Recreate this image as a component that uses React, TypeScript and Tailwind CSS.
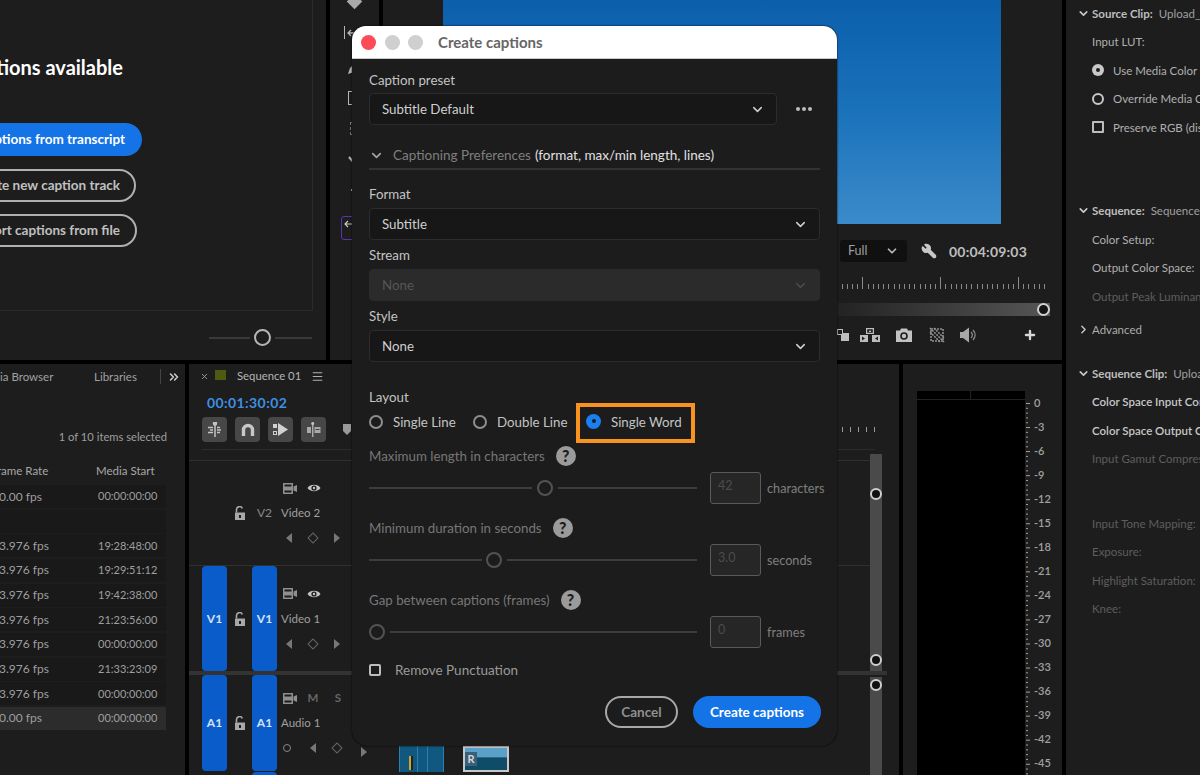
import { ChevronDown, ChevronRight, ChevronsRight, Menu, Plus, Wrench, X } from "lucide-react";

const MEDIA_ROWS = [
  { rate: "30.00 fps", start: "00:00:00:00" },
  { rate: "", start: "" },
  { rate: "23.976 fps", start: "19:28:48:00" },
  { rate: "23.976 fps", start: "19:29:51:12" },
  { rate: "23.976 fps", start: "19:42:38:00" },
  { rate: "23.976 fps", start: "21:23:56:00" },
  { rate: "23.976 fps", start: "00:00:00:00" },
  { rate: "23.976 fps", start: "21:33:23:09" },
  { rate: "23.976 fps", start: "00:00:00:00" },
  { rate: "30.00 fps", start: "00:00:00:00", selected: true },
];

const DB_LABELS = ["0", "-3", "-6", "-9", "-12", "-15", "-18", "-21", "-24", "-27", "-30", "-33", "-36", "-39", "-42", "-45"];

function FilmIcon() {
  return (
    <svg className="shrink-0" width="14" height="11" viewBox="0 0 14 11" fill="#8f8f8f">
      <path d="M0 0h10v11H0zM1.5 1.5v2h7v-2zM1.5 7.5v2h7v-2z" fillRule="evenodd" />
      <path d="M10.5 3.5L14 2v7l-3.5-1.5z" />
    </svg>
  );
}

function LockIcon() {
  return (
    <svg width="12" height="14" viewBox="0 0 12 14" fill="#a8a8a8">
      <path d="M1 6.5h10V14H1zM5 9v3h2V9z" fillRule="evenodd" />
      <path d="M2.5 6.5V3.5a3 3 0 0 1 5.8-1" fill="none" stroke="#a8a8a8" strokeWidth="1.6" />
    </svg>
  );
}

function EyeIcon() {
  return (
    <svg className="shrink-0" width="14" height="10" viewBox="0 0 14 10">
      <path d="M0.5 5C3 0.8 11 0.8 13.5 5C11 9.2 3 9.2 0.5 5z" fill="#c4c4c4" />
      <circle cx="7" cy="5" r="2.6" fill="#1d1d1d" />
      <circle cx="7" cy="5" r="1.2" fill="#c4c4c4" />
    </svg>
  );
}

function TriLeft({ className }: { className?: string }) {
  return <span className={`w-0 h-0 shrink-0 border-y-[5px] border-y-transparent border-r-[6px] border-r-[#777] ${className ?? ""}`} />;
}

function TriRight() {
  return <span className="w-0 h-0 shrink-0 border-y-[5px] border-y-transparent border-l-[6px] border-l-[#777]" />;
}

function KeyDiamond() {
  return <span className="w-[8px] h-[8px] shrink-0 rotate-45 border border-[#666] mx-[1px]" />;
}

function TrackButton({ label, active }: { label: string; active?: boolean }) {
  return (
    <div
      className={`w-[25px] flex items-center justify-center rounded-[4px] text-[12px] ${
        active ? "bg-[#0b5ccb] text-[#d5e2f5] font-bold" : "text-[#8a8a8a]"
      }`}
    >
      {label}
    </div>
  );
}

function Track({ src, name, label, audio, h }: { src?: string; name: string; label: string; audio?: boolean; h: string }) {
  const active = !!src;
  return (
    <div className={`flex pl-[13px] ${h}`}>
      {active ? <TrackButton label={src!} active /> : <div className="w-[25px]" />}
      <div className="w-[25px] flex items-center justify-center">
        <LockIcon />
      </div>
      <TrackButton label={label} active={active} />
      <div className="w-[76px] pl-[4px] flex flex-col justify-center gap-[11px] text-[11.5px] text-[#a0a0a0]">
        <div className="flex items-center gap-[10px] pl-[2px] h-[14px]">
          <FilmIcon />
          {audio ? (
            <>
              <span className="w-[12px] text-center font-bold text-[#666]">M</span>
              <span className="w-[12px] ml-[3px] text-center font-bold text-[#666]">S</span>
            </>
          ) : (
            <EyeIcon />
          )}
        </div>
        <div className="h-[14px] leading-[14px] whitespace-nowrap">{name}</div>
        <div className="flex items-center gap-[16px] h-[14px] pl-[5px]">
          {audio && <span className="w-[8px] h-[8px] ml-[-3px] shrink-0 rounded-full border border-[#888]" />}
          <TriLeft className={audio ? "ml-[3px]" : ""} />
          <KeyDiamond />
          {!audio && <TriRight />}
        </div>
      </div>
    </div>
  );
}

function Fader({ children, className }: { children: React.ReactNode; className: string }) {
  return <div className={`w-[12px] bg-[#4a4a4a] flex flex-col items-center ${className}`}>{children}</div>;
}

function FaderHandle({ className }: { className?: string }) {
  return <span className={`block w-[12px] h-[12px] shrink-0 rounded-full bg-[#111] border-[2px] border-[#cfcfcf] ${className ?? ""}`} />;
}

function ToolButton({ children }: { children: React.ReactNode }) {
  return <div className="w-[25px] h-[25px] rounded-[4px] bg-[#474747] flex items-center justify-center">{children}</div>;
}

function Select({ value, disabled, className }: { value: string; disabled?: boolean; className?: string }) {
  return (
    <div
      className={`h-[32px] rounded-[4px] flex items-center justify-between pl-[12px] pr-[11px] text-[13.3px] border ${
        disabled ? "bg-[#2b2b2b] border-[#2b2b2b] text-[#565656]" : "bg-[#171717] border-[#2c2c2c] text-[#cfcfcf]"
      } ${className ?? ""}`}
    >
      <span className="mt-[2px]">{value}</span>
      <ChevronDown size={15} strokeWidth={2.4} color={disabled ? "#4a4a4a" : "#cfcfcf"} />
    </div>
  );
}

function Label({ children, className }: { children: React.ReactNode; className?: string }) {
  return <div className={`text-[13.3px] leading-[18px] text-[#c4c4c4] ${className ?? ""}`}>{children}</div>;
}

function Radio({ label, checked }: { label: string; checked?: boolean }) {
  return (
    <div className="flex items-center gap-[10px] text-[13.3px] text-[#c4c4c4]">
      {checked ? (
        <span className="w-[15px] h-[15px] mb-[3px] shrink-0 rounded-full bg-[#1a7ff0] flex items-center justify-center">
          <span className="w-[4px] h-[4px] rounded-full bg-[#1b1b1b]" />
        </span>
      ) : (
        <span className="w-[14px] h-[14px] mb-[3px] shrink-0 rounded-full border-[2px] border-[#8e8e8e]" />
      )}
      <span className="whitespace-nowrap">{label}</span>
    </div>
  );
}

function HelpLabel({ children }: { children: string }) {
  return (
    <div className="flex items-center gap-[11px] h-[22px] text-[13.3px] text-[#777]">
      <span className="mt-[2px] whitespace-nowrap">{children}</span>
      <span className="w-[20px] h-[20px] rounded-full bg-[#9b9b9b] flex items-center justify-center text-[16px] font-black text-[#1c1c1c]">?</span>
    </div>
  );
}

function SliderRow({ left, right, value, unit }: { left: string; right: string; value: string; unit: string }) {
  return (
    <div className="flex items-center h-[32px] whitespace-nowrap">
      <div className="flex items-center w-[329px] shrink-0">
        <span className={`h-[2px] bg-[#3d3d3d] ${left}`} />
        <span className="w-[16px] h-[16px] rounded-full border-[2px] border-[#525252] shrink-0" />
        <span className={`h-[2px] bg-[#3d3d3d] ml-[5px] ${right}`} />
      </div>
      <div className="w-[51px] h-[32px] ml-[12px] shrink-0 rounded-[3px] border border-[#5a5a5a] bg-[#262626] pl-[7px] text-[12.5px] leading-[26px] text-[#4c4c4c]">{value}</div>
      <span className="ml-[6px] mt-[2px] text-[12.7px] text-[#7f7f7f]">{unit}</span>
    </div>
  );
}

function CaptionsDialog() {
  return (
    <div className="absolute left-[352px] top-[26px] w-[485px] h-[720px] rounded-t-[14px] rounded-b-[16px] overflow-hidden bg-[#1c1c1c] flex flex-col shadow-[0_0_2px_#000]">
      <div className="h-[33px] shrink-0 bg-white border-b border-[#c8c8c8] flex items-center pl-[9px]">
        <span className="w-[15px] h-[15px] rounded-full bg-[#fb4c58]" />
        <span className="w-[15px] h-[15px] ml-[8.5px] rounded-full bg-[#cfcfcf]" />
        <span className="w-[15px] h-[15px] ml-[8.5px] rounded-full bg-[#cfcfcf]" />
        <span className="ml-[15px] text-[15px] font-bold text-[#666]">Create captions</span>
      </div>
      <div className="pl-[17px] flex flex-col">
        <Label className="mt-[12px] mb-[4px]">Caption preset</Label>
        <div className="flex items-center">
          <Select value="Subtitle Default" className="w-[408px]" />
          <div className="flex gap-[2px] ml-[19px]">
            <span className="w-[4px] h-[4px] rounded-full bg-[#bdbdbd]" />
            <span className="w-[4px] h-[4px] rounded-full bg-[#bdbdbd]" />
            <span className="w-[4px] h-[4px] rounded-full bg-[#bdbdbd]" />
          </div>
        </div>
        <div className="mt-[21px] h-[24px] border-b-[2px] border-[#333] flex items-start w-[451px]">
          <ChevronDown size={15} strokeWidth={2.6} color="#a5a5a5" className="mt-[2px]" />
          <span className="ml-[9px] text-[13.5px] leading-[18px] whitespace-nowrap text-[#7f7f7f]">Captioning Preferences</span>
          <span className="ml-[4px] text-[13.5px] leading-[18px] whitespace-nowrap text-[#e0e0e0]">(format, max/min length, lines)</span>
        </div>
        <Label className="mt-[15px] mb-[5px]">Format</Label>
        <Select value="Subtitle" className="w-[451px]" />
        <Label className="mt-[6px] mb-[5px]">Stream</Label>
        <Select value="None" disabled className="w-[451px]" />
        <Label className="mt-[6px] mb-[5px]">Style</Label>
        <Select value="None" className="w-[451px]" />
        <Label className="mt-[26px]">Layout</Label>
        <div className="flex items-center h-[40px] mt-[-3px]">
          <div className="w-[104px]">
            <Radio label="Single Line" />
          </div>
          <div className="w-[103px]">
            <Radio label="Double Line" />
          </div>
          <div className="w-[119px] h-[40px] border-[4px] border-[#f7931e] pl-[6px] pb-[1px] flex items-center">
            <Radio label="Single Word" checked />
          </div>
        </div>
        <div className="mt-[2px]">
          <HelpLabel>Maximum length in characters</HelpLabel>
        </div>
        <div className="mt-[5px]">
          <SliderRow left="w-[163px] mr-[5px]" right="w-[139px]" value="42" unit="characters" />
        </div>
        <div className="mt-[13px]">
          <HelpLabel>Minimum duration in seconds</HelpLabel>
        </div>
        <div className="mt-[5px]">
          <SliderRow left="w-[113px] mr-[4px]" right="w-[190px]" value="3.0" unit="seconds" />
        </div>
        <div className="mt-[13px]">
          <HelpLabel>Gap between captions (frames)</HelpLabel>
        </div>
        <div className="mt-[5px]">
          <SliderRow left="w-0" right="w-[307px]" value="0" unit="frames" />
        </div>
        <div className="mt-[13px] flex items-center h-[18px] text-[13.5px] text-[#9a9a9a]">
          <span className="w-[12px] h-[12px] border-[2px] border-[#bdbdbd] rounded-[2px]" />
          <span className="ml-[14px]">Remove Punctuation</span>
        </div>
        <div className="mt-[17px] flex justify-end w-[452px] gap-[15px]">
          <div className="w-[73px] h-[32px] rounded-full border-[2px] border-[#a8a8a8] flex items-center justify-center text-[13.5px] font-bold text-[#8f8f8f]">Cancel</div>
          <div className="w-[128px] h-[32px] rounded-full bg-[#1473e6] flex items-center justify-center text-[13.5px] font-bold text-white">Create captions</div>
        </div>
      </div>
    </div>
  );
}

function CaptionsPanel() {
  return (
    <div className="w-[326px] h-full bg-[#1d1d1d] flex flex-col overflow-hidden">
      <div className="h-[311px] mr-[13px] border-r border-b border-[#2b2b2b] flex flex-col items-end whitespace-nowrap">
        <div className="mt-[53px] mr-[189px] text-[20px] leading-[28px] font-bold text-white">No captions available</div>
        <div className="mt-[42px] mr-[170px] h-[33px] px-[17px] rounded-full bg-[#1473e6] flex items-center text-[13.5px] font-bold text-white">Create captions from transcript</div>
        <div className="mt-[13px] mr-[176px] h-[33px] px-[14px] rounded-full border-[2px] border-[#b0b0b0] flex items-center text-[13.5px] font-bold text-[#c0c0c0]">Create new caption track</div>
        <div className="mt-[12px] mr-[175px] h-[33px] px-[15px] rounded-full border-[2px] border-[#b0b0b0] flex items-center text-[13.5px] font-bold text-[#c0c0c0]">Import captions from file</div>
      </div>
      <div className="flex items-center justify-end mr-[14px] mt-[18px]">
        <span className="w-[41px] h-[2px] bg-[#3a3a3a]" />
        <span className="w-[17px] h-[17px] mx-[4px] rounded-full border-[2px] border-[#b5b5b5]" />
        <span className="w-[37px] h-[2px] bg-[#3a3a3a]" />
      </div>
    </div>
  );
}

function ProgramPanel() {
  const ticks = Array.from({ length: 40 }, (_, i) => i);
  return (
    <div className="w-[732px] h-full flex gap-[4px]">
      <div className="w-[49px] bg-[#1d1d1d] flex flex-col items-center overflow-hidden">
        <span className="w-[11px] h-[11px] mt-[-4px] shrink-0 rotate-45 bg-[#a8a8a8]" />
        <div className="mt-[19px] flex items-center gap-[1px] mr-[6px]">
          <span className="w-[1px] h-[13px] bg-[#b5b5b5]" />
          <svg width="14" height="10" viewBox="0 0 14 10" fill="none" stroke="#b5b5b5" strokeWidth="1.3"><path d="M13 5H2M5 2L2 5l3 3" /></svg>
        </div>
        <svg className="mt-[22px] mr-[1px] shrink-0" width="14" height="14" viewBox="0 0 14 14" fill="#b5b5b5"><path d="M1 13l2-6 6-6 4 4-6 6z" /></svg>
        <span className="mt-[16px] mr-[3px] w-[11px] h-[14px] shrink-0 border border-[#b5b5b5]" />
        <span className="mt-[17px] mr-[1px] w-[9px] h-[13px] shrink-0 border border-dashed border-[#777]" />
        <svg className="mt-[20px] mr-[3px] shrink-0" width="14" height="14" viewBox="0 0 14 14" fill="none" stroke="#b5b5b5" strokeWidth="2"><path d="M3 2l5 6M12 7l-4 1v5" /></svg>
        <span className="mt-[20px] w-[7px] h-[7px] shrink-0 border-t-[2px] border-r-[2px] border-[#b5b5b5]" />
        <div className="mt-[20px] mr-[7px] w-[20px] h-[24px] shrink-0 rounded-[3px] border border-[#5a35a8] pl-[2px] pt-[3px]">
          <svg width="9" height="8" viewBox="0 0 9 8" fill="none" stroke="#c8c8c8" strokeWidth="1.2"><path d="M9 4H1M4 1L1 4l3 3" /></svg>
        </div>
      </div>
      <div className="flex-1 bg-[#1d1d1d] flex flex-col">
        <div className="h-[224px] pl-[60px] pr-[61px]">
          <div className="h-full bg-gradient-to-b from-[#0b5fab] via-[#1a72ba] to-[#3a8bca]" />
        </div>
        <div className="mt-[16px] h-[22px] flex items-center justify-end pr-[35px]">
          <div className="w-[67px] h-[22px] rounded-[3px] bg-[#101010] flex items-center justify-between pl-[8px] pr-[8px] text-[12.5px] text-[#a0a0a0]">
            <span>Full</span>
            <ChevronDown size={14} strokeWidth={3} color="#b8b8b8" />
          </div>
          <Wrench size={16} color="#c8c8c8" fill="#c8c8c8" className="ml-[14px] -scale-x-100" />
          <span className="ml-[12px] text-[14px] font-bold tracking-[0.2px] text-[#bdbdbd]">00:04:09:03</span>
        </div>
        <div className="mt-[15px] h-[12px] flex items-end justify-end gap-[4.2px] pr-[17px]">
          {ticks.map((i) => (
            <span key={i} className={`w-[1px] bg-[#8a8a8a] ${i % 15 === 4 ? "h-[12px]" : "h-[5px]"}`} />
          ))}
        </div>
        <div className="mt-[14px] flex justify-end pr-[12px]">
          <div className="w-[240px] h-[13px] bg-gradient-to-r from-[#1d1d1d] to-[#565656] flex items-center justify-end">
            <span className="w-[13px] h-[13px] rounded-full bg-[#141414] border-[2px] border-[#d0d0d0]" />
          </div>
        </div>
        <div className="mt-[12px] h-[14px] flex items-center justify-end pr-[25px]">
          <svg width="12" height="12" viewBox="0 0 12 12" fill="#bdbdbd"><rect x="4" y="4" width="8" height="8" /><rect x="0.5" y="0.5" width="5" height="5" fill="#1d1d1d" stroke="#bdbdbd" /></svg>
          <svg className="ml-[11px]" width="20" height="14" viewBox="0 0 20 14" fill="#bdbdbd">
            <path d="M6 0h8v6H6zM7.2 1.2v3.6h5.6V1.2z" fillRule="evenodd" />
            <path d="M8.5 4l1.5-2 1.5 2z" />
            <rect x="0" y="7" width="8" height="7" />
            <rect x="12" y="7" width="8" height="7" />
            <path d="M2 8.5l3 2-3 2zM18 8.5l-3 2 3 2z" fill="#1d1d1d" />
          </svg>
          <svg className="ml-[16px]" width="16" height="14" viewBox="0 0 16 14" fill="#c2c2c2">
            <path d="M0 2.5h4l1-2h6l1 2h4V14H0z" />
            <circle cx="8" cy="8" r="3" fill="none" stroke="#1d1d1d" strokeWidth="1.6" />
          </svg>
          <svg className="ml-[17px]" width="16" height="16" viewBox="0 0 16 16" fill="none" stroke="#8f8f8f" strokeWidth="1.6" strokeDasharray="2 1">
            <rect x="2" y="2" width="12" height="12" />
            <path d="M1 1l14 14M1 5l10 10M5 1l10 10" />
          </svg>
          <svg className="ml-[15px]" width="17" height="16" viewBox="0 0 17 16">
            <path d="M0 5h3l6-4.5v15L3 11H0z" fill="#a8a8a8" />
            <path d="M11 5a4 4 0 0 1 0 6M13 3a7 7 0 0 1 0 10" fill="none" stroke="#8f8f8f" strokeWidth="1.2" />
          </svg>
          <Plus size={14} color="#d8d8d8" strokeWidth={4} className="ml-[46px]" />
        </div>
      </div>
    </div>
  );
}

function MediaPanel() {
  return (
    <div className="w-[185px] h-full bg-[#1d1d1d] overflow-hidden whitespace-nowrap text-[11.5px] text-[#9f9f9f]">
      <div className="h-[25px] flex items-center text-[#a0a0a0]">
        <span className="ml-[-23px] w-[117px] shrink-0">Media Browser</span>
        <span className="w-[66px] shrink-0">Libraries</span>
        <span className="w-[1px] h-[15px] bg-[#444] shrink-0" />
        <ChevronsRight size={14} color="#d0d0d0" strokeWidth={2.6} className="ml-[6px] shrink-0" />
      </div>
      <div className="mt-[39px] h-[18px] leading-[18px] w-[167px] text-right text-[11.2px]">1 of 10 items selected</div>
      <div className="mt-[16px] h-[18px] flex items-center text-[#a8a8a8]">
        <span className="ml-[-9px] w-[105px] shrink-0">Frame Rate</span>
        <span>Media Start</span>
      </div>
      <div className="mt-[5px] w-[166px] flex flex-col gap-[1.67px]">
        {MEDIA_ROWS.map((row, i) => (
          <div key={i} className={`h-[23px] flex items-center ${row.selected ? "bg-[#2c2c2c]" : "bg-[#191919]"}`}>
            <span className="ml-[-8px] w-[106px] shrink-0 text-[12px]">{row.rate}</span>
            <span className="text-[11px]">{row.start}</span>
          </div>
        ))}
      </div>
    </div>
  );
}

function TimelinePanel() {
  return (
    <div className="w-[710px] h-full bg-[#1d1d1d] flex flex-col overflow-hidden">
      <div className="h-[25px] flex items-center pl-[11px] text-[11.3px] text-[#b5b5b5]">
        <X size={9} color="#999" strokeWidth={2.5} />
        <span className="ml-[6px] w-[11px] h-[10px] mb-[3px] bg-[#4d5a12]" />
        <span className="ml-[11px]">Sequence 01</span>
        <Menu size={13} color="#b0b0b0" className="ml-[10px]" />
      </div>
      <div className="h-[18px] mt-[5px] pl-[18px] text-[14px] leading-[18px] font-bold tracking-[0.4px] text-[#3f8fe0]">00:01:30:02</div>
      <div className="mt-[5px] pl-[13px] pr-[24px] h-[25px] flex items-center gap-[8px]">
        <ToolButton>
          <svg width="15" height="15" viewBox="0 0 15 15" fill="none" stroke="#c4c4c4" strokeWidth="1.5">
            <path d="M8 0v15M1 5.5h5M3 8h3M1 10.5h5M10 5.5h3M10 8h4M10 10.5h3" />
            <circle cx="8" cy="1.5" r="1.5" fill="#c4c4c4" />
          </svg>
        </ToolButton>
        <ToolButton>
          <svg width="14" height="13" viewBox="0 0 14 13" fill="none">
            <path d="M2.5 13V7a4.5 4.5 0 0 1 9 0v6" stroke="#c8c8c8" strokeWidth="3.4" />
          </svg>
        </ToolButton>
        <ToolButton>
          <svg width="17" height="15" viewBox="0 0 17 15" fill="#d0d0d0">
            <path d="M6 1l10 6.5L6 14z" />
            <path d="M1 2h4v4H1zM1 9h4v4H1zM2 10v2h2v-2z" fillRule="evenodd" />
          </svg>
        </ToolButton>
        <ToolButton>
          <svg width="15" height="15" viewBox="0 0 15 15" fill="#a8a8a8">
            <rect x="6" y="0" width="1.5" height="15" />
            <circle cx="6.7" cy="1.5" r="1.5" fill="#c4c4c4" />
            <rect x="1" y="5" width="4" height="6" />
            <path d="M8.5 5h6v6h-6zM9.5 7h4v1h-4z" fillRule="evenodd" />
          </svg>
        </ToolButton>
        <svg className="ml-[8px]" width="10" height="11" viewBox="0 0 10 11" fill="#9a9a9a"><path d="M1 0h8v7l-4 4-4-4z" /></svg>
        <div className="ml-auto flex items-end gap-[7px]">
          {[0, 1, 2, 3, 4, 5].map((i) => (
            <span key={i} className="w-[1px] h-[5px] bg-[#9a9a9a]" />
          ))}
        </div>
      </div>
      <div className="ml-[13px] mr-[24px] mt-[7px] h-[1px] bg-[#2c2c2c]" />
      <div className="flex mt-[4px]">
        <div className="flex-1 flex flex-col">
          <div className="h-[7px] border-b border-[#303030]" />
          <div className="border-b border-[#303030] h-[105px]">
            <Track name="Video 2" label="V2" h="h-[104px]" />
          </div>
          <Track src="V1" name="Video 1" label="V1" h="h-[105px]" />
        </div>
        <Fader className="mr-[17px] h-[217px]">
          <FaderHandle className="mt-[34px]" />
          <FaderHandle className="mt-[154px]" />
        </Fader>
      </div>
      <div className="h-[4px] mr-[12px] shrink-0 bg-[#333]" />
      <div className="flex flex-1 min-h-0">
        <div className="flex-1 flex flex-col">
          <Track src="A1" name="Audio 1" label="A1" audio h="h-[96px] shrink-0" />
          <div className="relative flex-1">
            <div className="absolute left-[63px] top-[1px] w-[25px] h-[10px] rounded-t-[4px] bg-[#0b5ccb]" />
          </div>
        </div>
        <Fader className="mr-[17px] mt-[2px]">
          <FaderHandle className="mt-[2px]" />
        </Fader>
      </div>
      <div className="absolute left-[399px] top-[746px] w-[45px] h-[26px] bg-[#10587f] border-x border-[#2b7fb0] flex">
        <span className="w-[4px] h-[14px] mt-[10px] ml-[9px] border-l-[2px] border-[#c9a82c] bg-[#222]" />
        <span className="w-[1px] ml-[4px] bg-[#2b7fb0]" />
        <span className="w-[1px] ml-[9px] bg-[#2b7fb0]" />
      </div>
      <div className="absolute left-[463px] top-[746px] w-[46px] h-[26px] border-[2px] border-[#c8c8c8] bg-gradient-to-b from-[#5aa0c8] from-40% to-[#0e4c68] to-45%">
        <span className="block w-[12px] h-[14px] mt-[4px] bg-[#3a5f78] text-[11px] font-bold leading-[14px] text-center text-[#d8d8d8]">R</span>
      </div>
      <div className="absolute left-[361px] top-[747px] w-0 h-0 border-y-[5px] border-y-transparent border-l-[6px] border-l-[#777]" />
    </div>
  );
}

function MeterPanel() {
  const marks = Array.from({ length: 80 }, (_, i) => i);
  return (
    <div className="flex-1 h-full bg-[#1d1d1d] flex pl-[14px] overflow-hidden">
      <div className="mt-[27px] w-[108px] bg-black shrink-0">
        <div className="h-[9px] border-b border-[#222] flex">
          <span className="w-[54px] border-r border-[#222]" />
        </div>
      </div>
      <svg className="mt-[39px] ml-[1px] shrink-0" width="5" height="385" viewBox="0 0 5 385" stroke="#a0a0a0">
        {marks.map((i) => (
          <line key={i} x1="0" x2={i % 5 === 0 ? 4 : 2} y1={i * 4.81 + 0.5} y2={i * 4.81 + 0.5} />
        ))}
      </svg>
      <div className="mt-[31px] ml-[3px] flex flex-col gap-[8.05px]">
        {DB_LABELS.map((db) => (
          <div key={db} className="h-[16px] flex items-center text-[11px] font-semibold text-[#a0a0a0]">
            {db}
          </div>
        ))}
      </div>
    </div>
  );
}

function EffectRow({ children, dim, strong }: { children: React.ReactNode; dim?: boolean; strong?: boolean }) {
  return (
    <div className={`h-[28.5px] flex items-center pl-[26px] whitespace-nowrap text-[11.5px] ${dim ? "text-[#5e5e5e]" : strong ? "text-[#c8c8c8] font-semibold" : "text-[#b0b0b0]"}`}>
      {children}
    </div>
  );
}

function SectionHead({ title, value, closed }: { title: string; value?: string; closed?: boolean }) {
  return (
    <div className="h-[28.5px] flex items-center pl-[11px] whitespace-nowrap text-[11.5px]">
      {closed ? (
        <ChevronRight size={13} color="#c8c8c8" strokeWidth={2.6} className="shrink-0" />
      ) : (
        <ChevronDown size={13} color="#c8c8c8" strokeWidth={3} className="mr-[2px] shrink-0" />
      )}
      <span className={closed ? "ml-[2px] text-[#acacac]" : "font-bold text-[#bdbdbd]"}>{title}</span>
      {value && <span className="ml-[6px] text-[#a0a0a0]">{value}</span>}
    </div>
  );
}

function ColorPanel() {
  return (
    <div className="flex-1 h-full bg-[#1d1d1d] overflow-hidden pt-[0px]">
      <div className="mt-[-1px]">
        <SectionHead title="Source Clip:" value="Upload_0317.mov" />
        <EffectRow>Input LUT:</EffectRow>
        <EffectRow>
          <span className="w-[12px] h-[12px] shrink-0 rounded-full bg-[#c8c8c8] flex items-center justify-center">
            <span className="w-[4px] h-[4px] rounded-full bg-[#1d1d1d]" />
          </span>
          <span className="ml-[9px]">Use Media Color Space</span>
        </EffectRow>
        <EffectRow>
          <span className="w-[12px] h-[12px] shrink-0 rounded-full border-[2px] border-[#c8c8c8]" />
          <span className="ml-[9px]">Override Media Color Space</span>
        </EffectRow>
        <EffectRow>
          <span className="w-[12px] h-[12px] shrink-0 border-[2px] border-[#bdbdbd] rounded-[1px]" />
          <span className="ml-[9px]">Preserve RGB (disables)</span>
        </EffectRow>
        <div className="h-[55px]" />
        <SectionHead title="Sequence:" value="Sequence 01" />
        <EffectRow>Color Setup:</EffectRow>
        <EffectRow>Output Color Space:</EffectRow>
        <EffectRow dim>Output Peak Luminance:</EffectRow>
        <div className="h-[5px]" />
        <SectionHead title="Advanced" closed />
        <div className="h-[15px]" />
        <SectionHead title="Sequence Clip:" value="Upload_0317.mov" />
        <EffectRow strong>Color Space Input Conversion</EffectRow>
        <EffectRow strong>Color Space Output Conversion</EffectRow>
        <EffectRow dim>Input Gamut Compression</EffectRow>
        <div className="h-[36px]" />
        <EffectRow dim>Input Tone Mapping:</EffectRow>
        <EffectRow dim>Exposure:</EffectRow>
        <EffectRow dim>Highlight Saturation:</EffectRow>
        <EffectRow dim>Knee:</EffectRow>
      </div>
    </div>
  );
}

export default function App() {
  return (
    <div className="relative w-[1200px] h-[775px] overflow-hidden bg-black font-['Lato',sans-serif]">
      <div className="flex h-full gap-[4px]">
        <div className="w-[1062px] flex flex-col gap-[4px] shrink-0">
          <div className="h-[360px] flex gap-[4px] shrink-0">
            <CaptionsPanel />
            <ProgramPanel />
          </div>
          <div className="flex-1 min-h-0 flex gap-[4px]">
            <MediaPanel />
            <TimelinePanel />
            <MeterPanel />
          </div>
        </div>
        <ColorPanel />
      </div>
      <CaptionsDialog />
    </div>
  );
}
